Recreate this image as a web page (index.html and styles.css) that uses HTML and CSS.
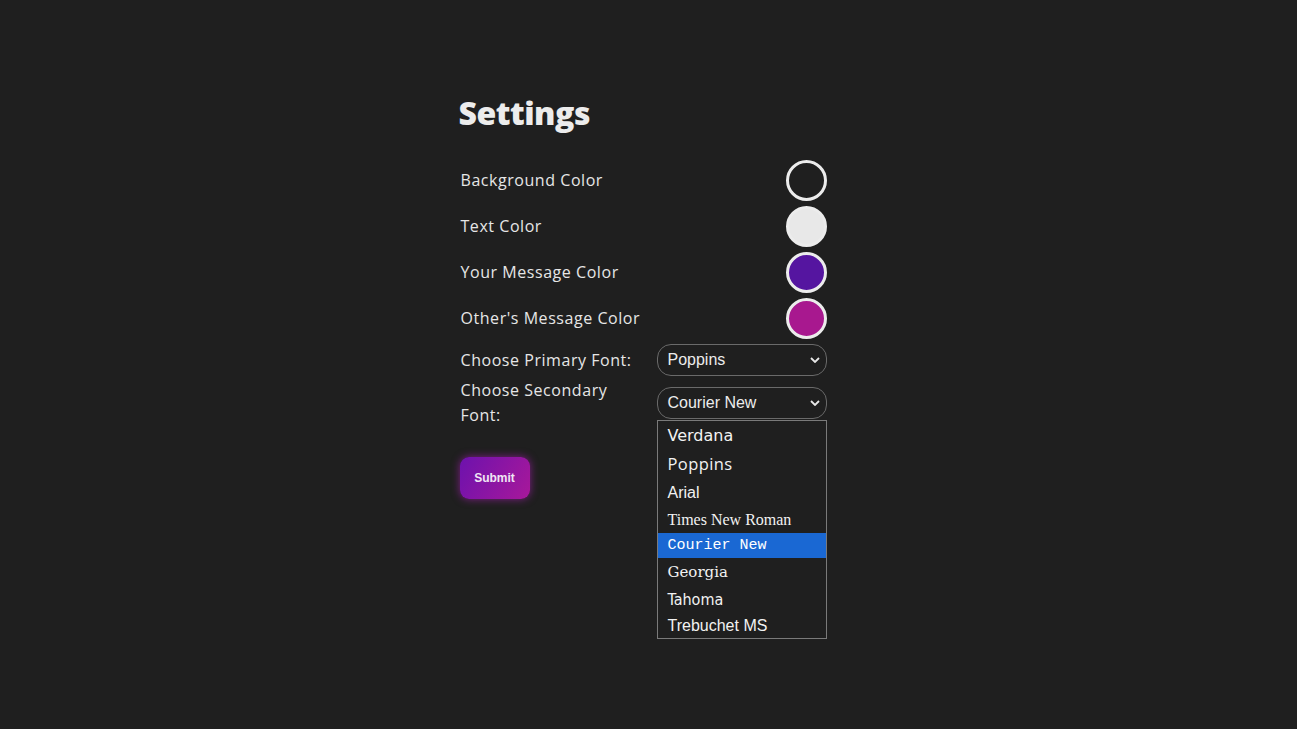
FILE: index.html
```html
<!DOCTYPE html>
<html>
<head>
<meta charset="utf-8">
<link rel="stylesheet" href="styles.css">
</head>
<body>
<div class="page">
  <form class="settings">
    <h1 class="title">Settings</h1>
    <div class="row color-row">
      <span class="label">Background Color</span>
      <span class="swatch sw-bg"></span>
    </div>
    <div class="row color-row">
      <span class="label">Text Color</span>
      <span class="swatch sw-text"></span>
    </div>
    <div class="row color-row">
      <span class="label">Your Message Color</span>
      <span class="swatch sw-mine"></span>
    </div>
    <div class="row color-row">
      <span class="label">Other's Message Color</span>
      <span class="swatch sw-other"></span>
    </div>
    <div class="row font-row first-font">
      <span class="label font-label">Choose Primary Font:</span>
      <div class="select"><span>Poppins</span><svg class="chev" viewBox="0 0 10 6" width="10" height="6"><path d="M1 1l4 4 4-4" fill="none" stroke="#e8e8e8" stroke-width="1.8"/></svg></div>
    </div>
    <div class="row font-row">
      <span class="label font-label">Choose Secondary Font:</span>
      <div class="select-wrap">
        <div class="select"><span>Courier New</span><svg class="chev" viewBox="0 0 10 6" width="10" height="6"><path d="M1 1l4 4 4-4" fill="none" stroke="#e8e8e8" stroke-width="1.8"/></svg></div>
        <ul class="menu">
          <li class="opt o-verdana">Verdana</li>
          <li class="opt o-poppins">Poppins</li>
          <li class="opt o-arial">Arial</li>
          <li class="opt o-times">Times New Roman</li>
          <li class="opt o-courier selected">Courier New</li>
          <li class="opt o-georgia">Georgia</li>
          <li class="opt o-tahoma">Tahoma</li>
          <li class="opt o-trebuchet">Trebuchet MS</li>
        </ul>
      </div>
    </div>
    <button type="button" class="submit">Submit</button>
  </form>
</div>
</body>
</html>
```
FILE: styles.css
```css
* { box-sizing: border-box; }
html, body { margin: 0; padding: 0; }
body {
  background: #1f1f1f;
  color: #e8e8e8;
  font-family: "Open Sans", "Noto Sans", sans-serif;
  height: 729px;
  overflow: hidden;
}
.page {
  display: flex;
  justify-content: center;
  padding-top: 89px;
}
.settings {
  width: 380px;
  padding-right: 12px;
  display: flex;
  flex-direction: column;
}
.title {
  margin: 0 0 23px 0;
  font-family: "Open Sans", sans-serif;
  font-weight: 800;
  font-size: 32px;
  line-height: 48px;
  letter-spacing: -0.5px;
  color: #ececec;
}
.row {
  display: flex;
  align-items: center;
  justify-content: space-between;
  padding-left: 2px;
}
.color-row { height: 40px; margin-bottom: 6px; }
.label {
  font-size: 16px;
  line-height: 25px;
  color: #e6e6e6;
  letter-spacing: 0.55px;
}
.swatch {
  width: 41px;
  height: 41px;
  border-radius: 50%;
  border: 3px solid #ececec;
}
.sw-bg { background: #1f1f1f; }
.sw-text { background: #e8e8e8; }
.sw-mine { background: #5515a0; }
.sw-other { background: #a8188f; }
.font-row { align-items: center; }
.first-font { height: 32px; margin-bottom: 2px; }
.font-label { width: 180px; }
.select-wrap { position: relative; }
.select {
  width: 170px;
  height: 32px;
  border: 1px solid #6a6a6a;
  border-radius: 14px;
  background: #1f1f1f;
  display: flex;
  align-items: center;
  justify-content: space-between;
  padding: 0 6px 0 10px;
  font-family: "Liberation Sans", Arial, sans-serif;
  font-size: 16px;
  color: #ececec;
}
.chev { display: block; }
.menu {
  position: absolute;
  left: 0;
  top: 33px;
  width: 170px;
  margin: 0;
  padding: 0;
  list-style: none;
  background: #1f1f1f;
  border: 1px solid #7a7a7a;
  z-index: 5;
}
.opt {
  display: flex;
  align-items: center;
  padding-left: 10px;
  color: #f2f2f2;
  font-size: 16px;
}
.o-verdana { height: 28px; font-family: "DejaVu Sans", sans-serif; font-size: 16px; }
.o-poppins { height: 29px; font-family: "Open Sans", sans-serif; font-size: 16.5px; letter-spacing: 0.4px; }
.o-arial { height: 29px; font-family: "Liberation Sans", sans-serif; }
.o-times { height: 26px; font-family: "Liberation Serif", serif; }
.o-courier { height: 25px; font-family: "Liberation Mono", monospace; font-size: 15px; }
.o-georgia { height: 28px; font-family: "DejaVu Serif", serif; font-size: 15px; }
.o-tahoma { height: 27px; font-family: "DejaVu Sans Condensed", "DejaVu Sans", sans-serif; font-size: 16px; }
.o-trebuchet { height: 25px; font-family: "Liberation Sans Narrow", "Liberation Sans", sans-serif; font-size: 16px; }
.selected { background: #1a68d3; color: #ffffff; }
.submit {
  margin-top: 29px;
  margin-left: 1px;
  align-self: flex-start;
  width: 70px;
  height: 42px;
  border: none;
  border-radius: 9px;
  background: linear-gradient(120deg, #6d12ad 0%, #a8189a 100%);
  box-shadow: 0 0 8px rgba(170, 30, 180, 0.7);
  color: #f0e6f4;
  font-family: "Liberation Sans", Arial, sans-serif;
  font-weight: 700;
  font-size: 12px;
}
```
